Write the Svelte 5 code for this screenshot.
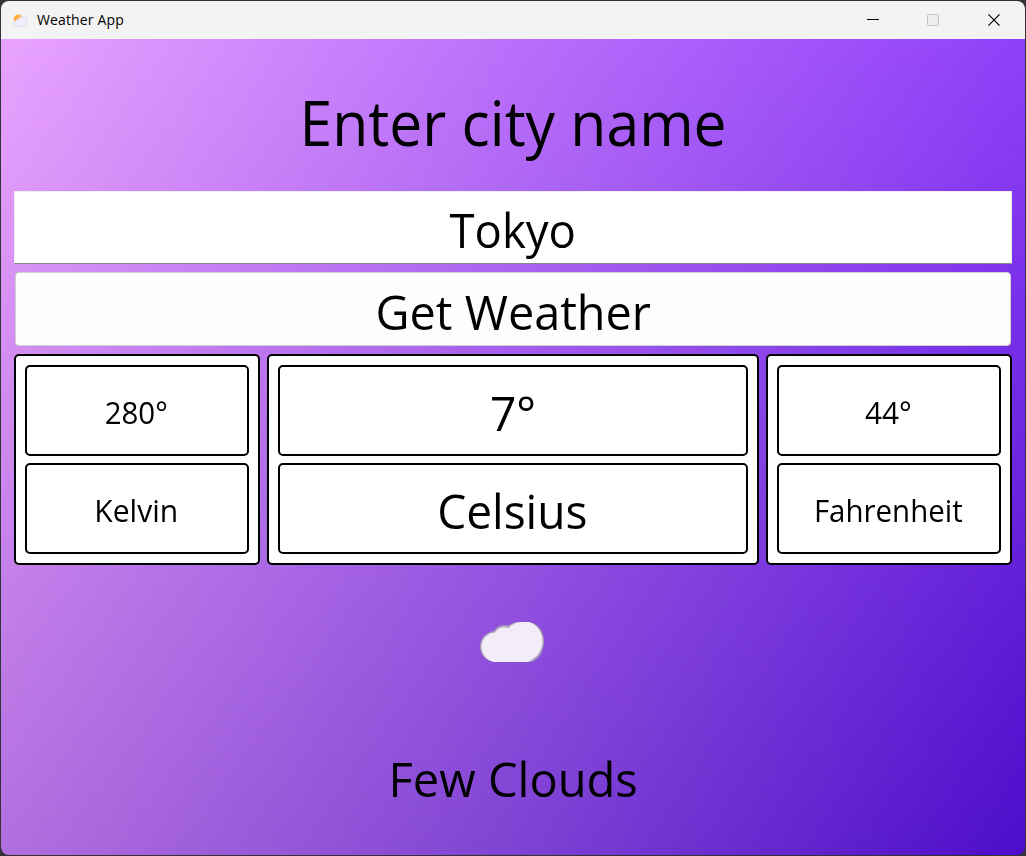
<script>
  const scales = [
    { value: '280°', unit: 'Kelvin', kind: 'side', vs: 0.95, us: 0.97 },
    { value: '7°', unit: 'Celsius', kind: 'main', vs: 0.96, us: 0.96 },
    { value: '44°', unit: 'Fahrenheit', kind: 'side', vs: 0.96, us: 0.95 }
  ];
</script>

<div class="desktop">
  <main class="window">
    <header>
      <svg class="logo" width="14" height="13" viewBox="0 0 14 13">
        <circle cx="5.2" cy="4.8" r="4.4" fill="#ffb13c" />
        <path d="M3.600 12.300a2.900 2.900 0 0 1-.4-5.700 2.200 2.200 0 0 1 2.700-1.600 4 4 0 0 1 7.500 3.500c0 2.400-1.500 3.800-3.700 3.800z" fill="#f2edfa" stroke="#d8d1df" stroke-width=".6" />
      </svg>
      <span class="title">Weather App</span>
      <div class="controls">
        <svg width="12" height="12"><path d="M0 5.500h12" stroke="#000" /></svg>
        <svg width="12" height="12"><rect x=".5" y=".5" width="11" height="11" rx="1" fill="#eee" stroke="#c4c4c4" /></svg>
        <svg width="12" height="12"><path d="M.4.4l11.200 11.200M11.600.4L.4 11.600" stroke="#000" stroke-width="1.15" /></svg>
      </div>
    </header>
    <section class="body">
      <h1><span>Enter city name</span></h1>
      <div class="field"><span>Tokyo</span></div>
      <button><span>Get Weather</span></button>
      <div class="cards">
        {#each scales as s}
          <div class="card {s.kind}">
            <div class="cell"><span style:transform="scaleX({s.vs})">{s.value}</span></div>
            <div class="cell"><span style:transform="scaleX({s.us})">{s.unit}</span></div>
          </div>
        {/each}
      </div>
      <div class="icon">
        <svg width="64" height="40" viewBox="0 0 64 40">
          <path d="M13 40C5 38 0 32 0 25 0 16 6 10 14 9 17 4 22 2 28 3.500 32 1 36 0 40 0H50C58 2 64 9 64 19 64 30 58 38 51 40Z" fill="#aaa0b8" />
          <path d="M14 40C6 38 1.500 32 1.500 25 1.500 17 7 11 15 10.500 18 5.500 23 4.500 28.500 6 32 2 36 .5 41 0H49C57 2.500 62.500 10 62.500 19 62.500 29 56 37 47 40Z" fill="#f2edf8" />
        </svg>
      </div>
      <p><span>Few Clouds</span></p>
    </section>
  </main>
</div>

<style>
  :global(body) { margin: 0; overflow: hidden; }
  * { box-sizing: border-box; }
  .desktop { width: 1026px; height: 856px; padding: 1px; background: #333238; font-family: "Open Sans", "Noto Sans", sans-serif; color: #000; }
  .window { height: 854px; border-radius: 8px; overflow: hidden; display: flex; flex-direction: column; }
  span { display: inline-block; }
  header { height: 38px; flex: none; background: #f3f3f3; display: flex; align-items: center; padding: 0 25px 0 12px; }
  .title { margin: -2px 0 0 10px; font-size: 14px; letter-spacing: .14px; }
  .controls { margin-left: auto; display: flex; gap: 48px; }
  .controls svg { display: block; }
  .controls svg:last-child { margin-left: 1px; }
  .body { position: relative; isolation: isolate; flex: 1; padding: 0 13px; display: flex; flex-direction: column; background: linear-gradient(to right, #b26fdf, #7f43d3 50%, #4d0dca); }
  .body::before { content: ""; position: absolute; inset: 0; z-index: -1; background: linear-gradient(to right, #e9a3fe, #bd72fb 47%, #8f40f8); -webkit-mask-image: linear-gradient(#000, transparent); mask-image: linear-gradient(#000, transparent); }
  h1 { margin: 0; height: 152px; line-height: 167px; font-size: 62px; font-weight: 400; text-align: center; }
  h1 span { transform: scaleX(.949); }
  .field { height: 73px; line-height: 75px; font-size: 48px; text-align: center; background: #fff; border: 1px solid #eee; border-bottom-color: #868686; }
  .field span { transform: scaleX(.947); }
  button { margin: 8px 1px 0; padding: 6px 0 0; height: 74px; font: inherit; font-size: 48px; line-height: 66px; background: #fdfdfd; border: 1px solid #d0d0d0; border-radius: 4px; color: #000; }
  button span { transform: scaleX(.975); }
  .cards { margin-top: 8px; height: 211px; display: grid; grid-template-columns: 246px 492px 246px; gap: 7px; }
  .card { border: 2px solid #000; border-radius: 5px; background: #fff; padding: 9px; display: flex; flex-direction: column; gap: 7px; }
  .cell { flex: 1; border: 2px solid #000; border-radius: 5px; display: flex; align-items: center; justify-content: center; font-size: 31px; padding: 2px 1px 0 0; }
  .main .cell { font-size: 48px; padding-top: 4px; }
  .icon { height: 154px; padding: 57px 2px 0 0; display: flex; justify-content: center; }
  .icon svg { display: block; }
  p { margin: 0; font-size: 48px; line-height: 120px; text-align: center; }
  p span { transform: scaleX(.98); }
</style>
